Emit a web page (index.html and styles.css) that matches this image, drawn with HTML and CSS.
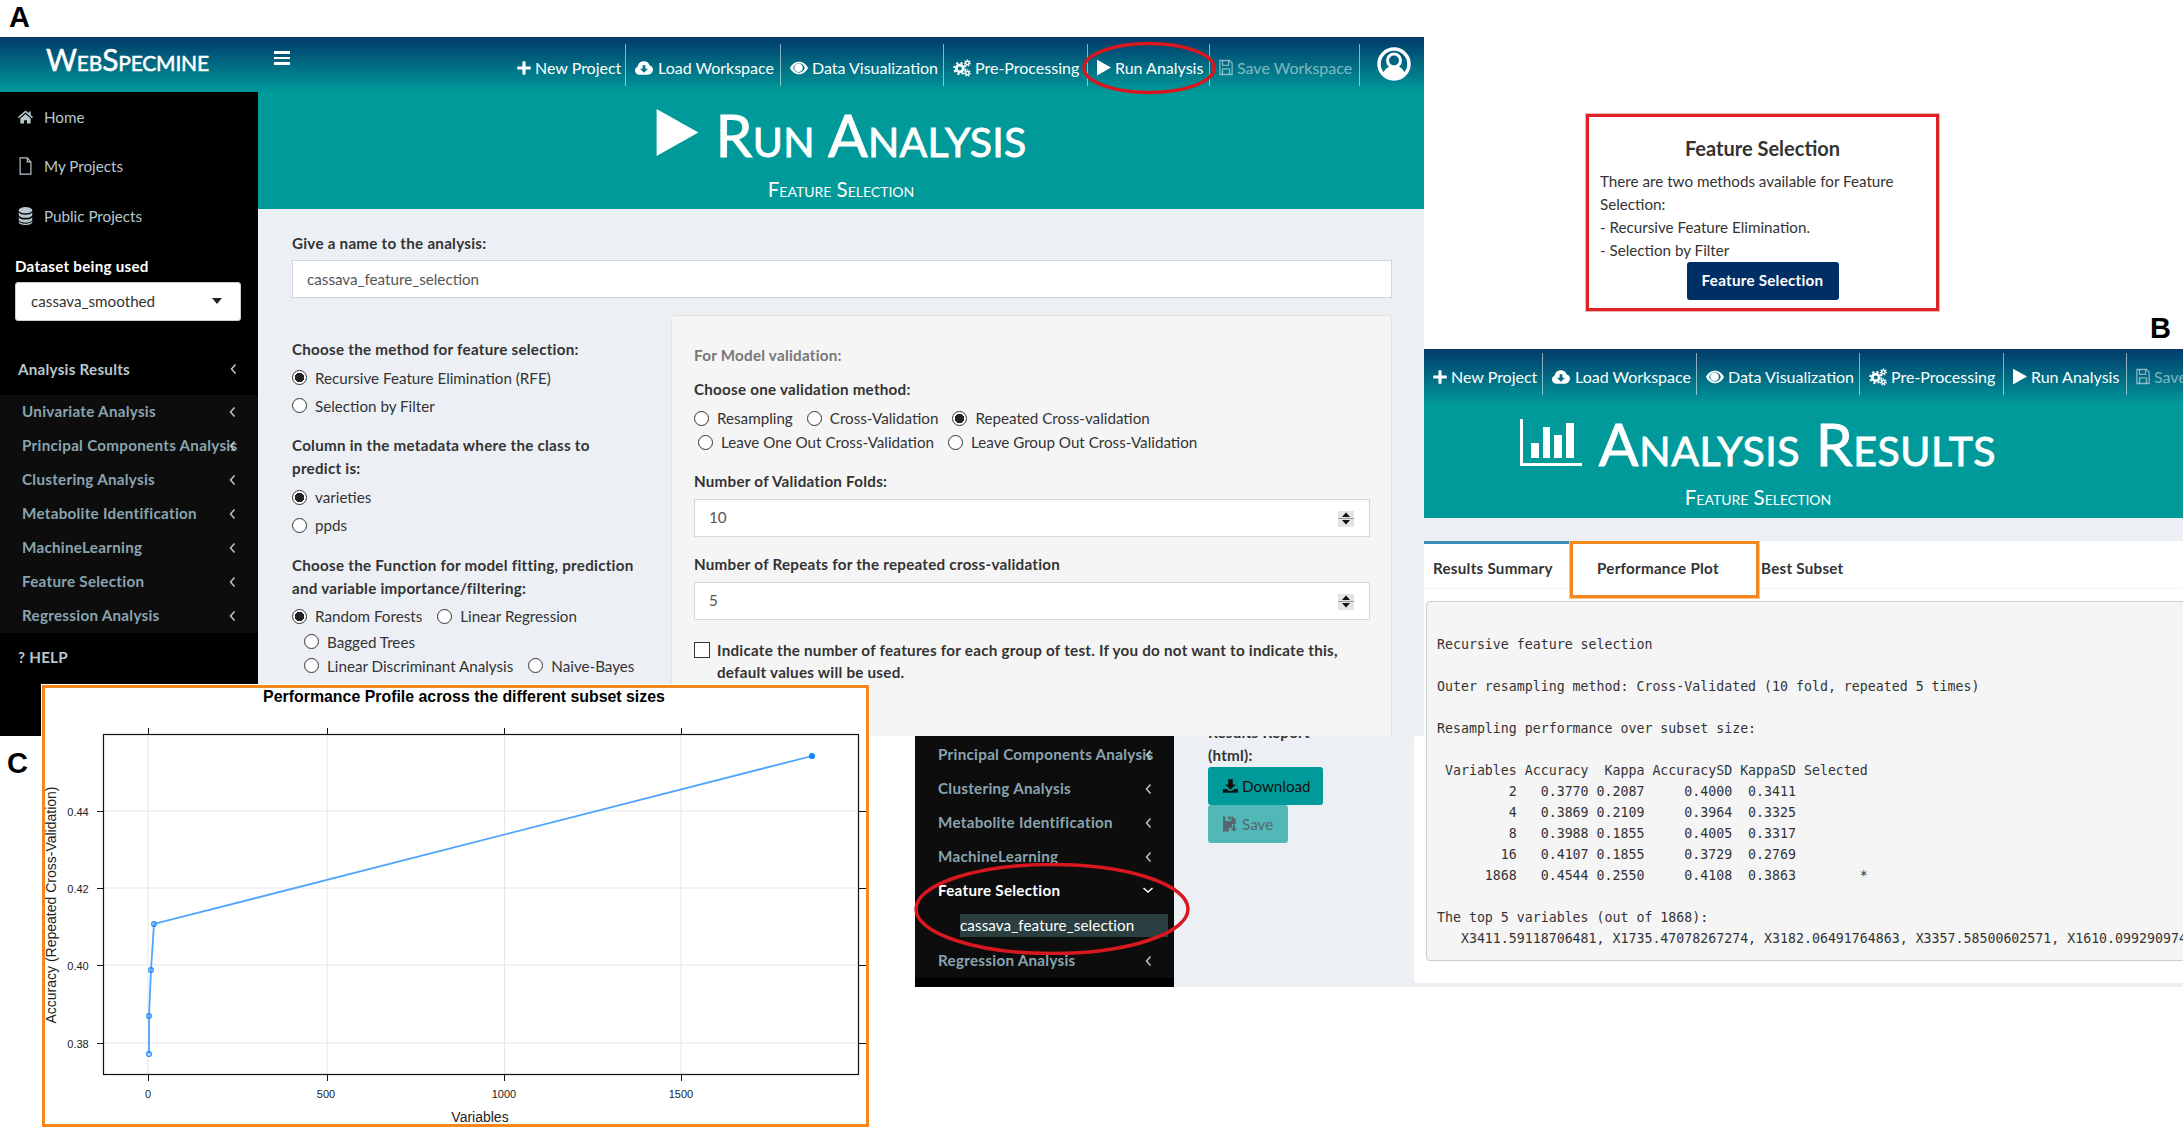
FILE: index.html
```html
<!DOCTYPE html>
<html lang="en">
<head>
<meta charset="utf-8">
<title>WebSpecmine feature selection</title>
<link rel="stylesheet" href="styles.css">
</head>
<body>
<svg class="sprite" aria-hidden="true">
  <symbol id="i-plus" viewBox="0 0 16 16"><path d="M6.2 1.2a1 1 0 0 1 1-1h1.6a1 1 0 0 1 1 1v5h5a1 1 0 0 1 1 1v1.6a1 1 0 0 1-1 1h-5v5a1 1 0 0 1-1 1H7.2a1 1 0 0 1-1-1v-5h-5a1 1 0 0 1-1-1V7.2a1 1 0 0 1 1-1h5z"/></symbol>
  <symbol id="i-cloud" viewBox="0 0 20 16"><path fill-rule="evenodd" d="M5 15.5C2.2 15.5 0 13.4 0 10.8c0-2 1.2-3.7 3-4.4C3.4 3 6.3.5 9.8.5c3 0 5.6 1.8 6.6 4.6 2.1.5 3.6 2.4 3.6 4.7 0 3.1-2.4 5.7-5.5 5.7zM10 13.2l4.4-4.4h-2.9V5h-3v3.8H5.6z"/></symbol>
  <symbol id="i-eye" viewBox="0 0 20 14"><path fill-rule="evenodd" d="M10 0C5.5 0 1.8 3 0 7c1.800 4 5.500 7 10 7s8.200-3 10-7C18.200 3 14.500 0 10 0zM10 1.800c-3 0-5.500 2.300-6.500 5.200 1 2.900 3.500 5.200 6.500 5.200s5.500-2.300 6.500-5.200c-1-2.900-3.500-5.200-6.500-5.200z"/><circle cx="9.500" cy="6.800" r="4.700"/></symbol>
  <symbol id="i-cogs" viewBox="0 0 20 20">
    <circle cx="7.500" cy="10.500" r="3.800" fill="none" stroke="currentColor" stroke-width="3"/>
    <circle cx="7.500" cy="10.500" r="6.300" fill="none" stroke="currentColor" stroke-width="2" stroke-dasharray="2.500 2.450"/>
    <circle cx="16" cy="4.500" r="1.900" fill="none" stroke="currentColor" stroke-width="1.700"/>
    <circle cx="16" cy="4.500" r="3.300" fill="none" stroke="currentColor" stroke-width="1.300" stroke-dasharray="1.500 1.400"/>
    <circle cx="16" cy="15.500" r="1.900" fill="none" stroke="currentColor" stroke-width="1.700"/>
    <circle cx="16" cy="15.500" r="3.300" fill="none" stroke="currentColor" stroke-width="1.300" stroke-dasharray="1.500 1.400"/>
  </symbol>
  <symbol id="i-play" viewBox="0 0 16 18"><path d="M0 0 16 9 0 18z"/></symbol>
  <symbol id="i-floppy" viewBox="0 0 16 18"><g fill="none" stroke="currentColor" stroke-width="1.500"><path d="M1 1h11l3 3v13H1z"/><path d="M4 1v5.500h7V1"/><path d="M4 17v-6.500h8V17"/></g></symbol>
  <symbol id="i-home" viewBox="0 0 16 14"><path d="M8 0 0 7l1 1.200 7-6 7 6 1-1.200-2.500-2.200V1h-2v2.100z"/><path d="M2.500 8.500V14h4v-3.500h3V14h4V8.500L8 3.800z"/></symbol>
  <symbol id="i-file" viewBox="0 0 14 20"><path fill="none" stroke="currentColor" stroke-width="1.300" d="M1 1h8l4 4.500V19H1zM9 1v4.500h4"/></symbol>
  <symbol id="i-db" viewBox="0 0 16 20"><ellipse cx="8" cy="3.500" rx="7.500" ry="3.500"/><path d="M.5 5.500v3c0 2 3.400 3.500 7.500 3.500s7.500-1.500 7.500-3.500v-3C14.500 7.800 11.500 8.500 8 8.500S1.500 7.800.5 5.500z"/><path d="M.5 11v3c0 2 3.400 3.500 7.500 3.500s7.500-1.500 7.500-3.500v-3c-1 2.300-4 3-7.500 3S1.500 13.300.5 11z"/><path d="M.5 15.500V17c0 1.800 3.400 3 7.500 3s7.500-1.200 7.500-3v-1.500c-1 2.200-4 3-7.500 3s-6.500-.8-7.500-3z"/></symbol>
  <symbol id="i-user" viewBox="0 0 34 34">
    <circle cx="17" cy="17" r="15" fill="none" stroke="currentColor" stroke-width="3.500"/>
    <circle cx="17" cy="13.500" r="6.500" fill="none" stroke="currentColor" stroke-width="3"/>
    <path d="M6 27c1.500-5 5-7 7-7.500 2.500 1.500 5.500 1.500 8 0 2 .5 5.500 2.500 7 7.500a15 15 0 0 1-22 0z"/>
  </symbol>
  <symbol id="i-left" viewBox="0 0 8 12"><path d="M6 1.500 2 6l4 4.500" fill="none" stroke="currentColor" stroke-width="1.500"/></symbol>
  <symbol id="i-down" viewBox="0 0 12 8"><path d="M1.500 2 6 6l4.500-4" fill="none" stroke="currentColor" stroke-width="1.500"/></symbol>
  <symbol id="i-dl" viewBox="0 0 20 18"><path d="M7 0h6v7h4l-7 7-7-7h4zM0 13h5l3 2.500h4l3-2.500h5v5H0z"/></symbol>
  <symbol id="i-savedn" viewBox="0 0 20 20"><path d="M0 0h3v6h8V0h2l4 4v6h-5v5H8v5H0z"/><path d="M7 0h3v4H7zM13 11h3v5h3l-4.500 4L10 16h3z"/></symbol>
  <symbol id="i-bars" viewBox="0 0 62 48"><path d="M0 0h3v44h59v3H0zM11 24h8v15h-8zM23 8h7v31h-7zM34 16h8v23h-8zM46 4h8v35h-8z"/></symbol>
  <symbol id="i-spin" viewBox="0 0 16 17"><rect width="16" height="17" fill="#e4e4e4"/><rect x="0" y="0" width="16" height="1" fill="#fff"/><rect x="0" y="8" width="16" height="1" fill="#9a9a9a"/><path d="M8 2.500 12 7H4zM8 14.500 4 10h8z" fill="#111"/></symbol>
</svg>

<!-- Panel letters -->
<div class="letter letter-a">A</div>
<div class="letter letter-b">B</div>
<div class="letter letter-c">C</div>

<!-- Panel D: sidebar fragment with Feature Selection open -->
<section class="shot shot-d">
  <aside class="side-d">
    <ul class="submenu submenu-d">
      <li>Principal Components Analysis<svg class="chev"><use href="#i-left"/></svg></li>
      <li>Clustering Analysis<svg class="chev"><use href="#i-left"/></svg></li>
      <li>Metabolite Identification<svg class="chev"><use href="#i-left"/></svg></li>
      <li>MachineLearning<svg class="chev"><use href="#i-left"/></svg></li>
      <li class="open">Feature Selection<svg class="chev-down"><use href="#i-down"/></svg></li>
      <li class="leaf"><span class="leaf-text">cassava_feature_selection</span></li>
      <li>Regression Analysis<svg class="chev"><use href="#i-left"/></svg></li>
    </ul>
  </aside>
  <div class="report">
    <div class="report-col">
      <div class="report-label">Results Report<br>(html):</div>
      <div class="btn-teal"><svg class="ic-dl"><use href="#i-dl"/></svg>Download</div>
      <div class="btn-teal-off"><svg class="ic-dl"><use href="#i-savedn"/></svg>Save</div>
    </div>
    <div class="box-edge"></div>
  </div>
</section>

<!-- Panel A: Run Analysis page -->
<section class="shot shot-a">
  <header class="navbar navbar-a">
    <div class="logo">WebSpecmine</div>
    <div class="burger"><i></i><i></i><i></i></div>
    <nav class="topnav">
      <div class="navitem"><svg class="ic ic-plus"><use href="#i-plus"/></svg>New Project</div>
      <div class="navitem"><svg class="ic ic-cloud"><use href="#i-cloud"/></svg>Load Workspace</div>
      <div class="navitem"><svg class="ic ic-eye"><use href="#i-eye"/></svg>Data Visualization</div>
      <div class="navitem"><svg class="ic ic-cog"><use href="#i-cogs"/></svg>Pre-Processing</div>
      <div class="navitem"><svg class="ic ic-play"><use href="#i-play"/></svg>Run Analysis</div>
      <div class="navitem muted"><svg class="ic ic-play"><use href="#i-floppy"/></svg>Save Workspace</div>
    </nav>
    <svg class="ic-user"><use href="#i-user"/></svg>
  </header>
  <div class="layout-a">
    <aside class="side-a">
      <ul class="mainmenu">
        <li><svg class="mi"><use href="#i-home"/></svg>Home</li>
        <li><svg class="mi"><use href="#i-file"/></svg>My Projects</li>
        <li><svg class="mi"><use href="#i-db"/></svg>Public Projects</li>
      </ul>
      <div class="ds-label">Dataset being used</div>
      <div class="ds-select">cassava_smoothed<span class="caret"></span></div>
      <div class="ar-title">Analysis Results<svg class="chev"><use href="#i-left"/></svg></div>
      <ul class="submenu">
        <li>Univariate Analysis<svg class="chev"><use href="#i-left"/></svg></li>
        <li>Principal Components Analysis<svg class="chev"><use href="#i-left"/></svg></li>
        <li>Clustering Analysis<svg class="chev"><use href="#i-left"/></svg></li>
        <li>Metabolite Identification<svg class="chev"><use href="#i-left"/></svg></li>
        <li>MachineLearning<svg class="chev"><use href="#i-left"/></svg></li>
        <li>Feature Selection<svg class="chev"><use href="#i-left"/></svg></li>
        <li>Regression Analysis<svg class="chev"><use href="#i-left"/></svg></li>
      </ul>
      <div class="help">? HELP</div>
    </aside>
    <main class="main-a">
      <div class="head head-a">
        <div class="head-row">
          <svg class="head-play"><use href="#i-play"/></svg>
          <h1 class="head-title">Run Analysis</h1>
        </div>
        <div class="head-sub">Feature Selection</div>
      </div>
      <div class="form">
        <div class="lbl">Give a name to the analysis:</div>
        <div class="field field-name">cassava_feature_selection</div>
        <div class="cols">
          <div class="col-left">
            <div class="lbl">Choose the method for feature selection:</div>
            <label class="opt first"><input type="radio" name="m" checked>Recursive Feature Elimination (RFE)</label>
            <label class="opt"><input type="radio" name="m">Selection by Filter</label>
            <div class="lbl gap">Column in the metadata where the class to<br>predict is:</div>
            <label class="opt first"><input type="radio" name="c" checked>varieties</label>
            <label class="opt"><input type="radio" name="c">ppds</label>
            <div class="lbl gap">Choose the Function for model fitting, prediction<br>and variable importance/filtering:</div>
            <div class="optrow first tall">
              <label><input type="radio" name="f" checked>Random Forests</label>
              <label class="w15"><input type="radio" name="f">Linear Regression</label>
            </div>
            <div class="optrow indent"><label><input type="radio" name="f">Bagged Trees</label></div>
            <div class="optrow indent">
              <label><input type="radio" name="f">Linear Discriminant Analysis</label>
              <label class="w15"><input type="radio" name="f">Naive-Bayes</label>
            </div>
          </div>
          <div class="well">
            <div class="lbl lbl-gray">For Model validation:</div>
            <div class="lbl lbl-choose">Choose one validation method:</div>
            <div class="optrow vfirst">
              <label><input type="radio" name="v">Resampling</label>
              <label class="w14"><input type="radio" name="v">Cross-Validation</label>
              <label class="w14"><input type="radio" name="v" checked>Repeated Cross-validation</label>
            </div>
            <div class="optrow indent">
              <label><input type="radio" name="v">Leave One Out Cross-Validation</label>
              <label class="w14"><input type="radio" name="v">Leave Group Out Cross-Validation</label>
            </div>
            <div class="lbl lbl-folds">Number of Validation Folds:</div>
            <div class="field field-num">10<svg class="spin"><use href="#i-spin"/></svg></div>
            <div class="lbl lbl-rep">Number of Repeats for the repeated cross-validation</div>
            <div class="field field-num">5<svg class="spin"><use href="#i-spin"/></svg></div>
            <label class="check"><input type="checkbox"><span>Indicate the number of features for each group of test. If you do not want to indicate this,<br>default values will be used.</span></label>
          </div>
        </div>
      </div>
    </main>
  </div>
</section>
<svg class="ring ring-a" viewBox="0 0 136 54"><ellipse cx="68" cy="27" rx="65" ry="24.500"/></svg>

<!-- Panel: Feature Selection card -->
<section class="card">
  <h3 class="card-title">Feature Selection</h3>
  <p class="card-text">There are two methods available for Feature<br>Selection:<br>- Recursive Feature Elimination.<br>- Selection by Filter</p>
  <div class="card-btn">Feature Selection</div>
</section>

<!-- Panel B: Analysis Results page -->
<section class="shot shot-b">
  <header class="navbar navbar-b">
    <nav class="topnav">
      <div class="navitem"><svg class="ic ic-plus"><use href="#i-plus"/></svg>New Project</div>
      <div class="navitem"><svg class="ic ic-cloud"><use href="#i-cloud"/></svg>Load Workspace</div>
      <div class="navitem"><svg class="ic ic-eye"><use href="#i-eye"/></svg>Data Visualization</div>
      <div class="navitem"><svg class="ic ic-cog"><use href="#i-cogs"/></svg>Pre-Processing</div>
      <div class="navitem"><svg class="ic ic-play"><use href="#i-play"/></svg>Run Analysis</div>
      <div class="navitem muted"><svg class="ic ic-play"><use href="#i-floppy"/></svg>Save Workspace</div>
    </nav>
  </header>
  <div class="head head-b">
    <div class="head-row">
      <svg class="head-bars"><use href="#i-bars"/></svg>
      <h1 class="head-title">Analysis Results</h1>
    </div>
    <div class="head-sub">Feature Selection</div>
  </div>
  <div class="results">
    <div class="tabs">
      <div class="tab tab-active">Results Summary</div>
      <div class="tab tab-hi">Performance Plot</div>
      <div class="tab tab-last">Best Subset</div>
    </div>
<pre class="output">

Recursive feature selection

Outer resampling method: Cross-Validated (10 fold, repeated 5 times)

Resampling performance over subset size:

 Variables Accuracy  Kappa AccuracySD KappaSD Selected
         2   0.3770 0.2087     0.4000  0.3411
         4   0.3869 0.2109     0.3964  0.3325
         8   0.3988 0.1855     0.4005  0.3317
        16   0.4107 0.1855     0.3729  0.2769
      1868   0.4544 0.2550     0.4108  0.3863        *

The top 5 variables (out of 1868):
   X3411.59118706481, X1735.47078267274, X3182.06491764863, X3357.58500602571, X1610.09929097412
</pre>
  </div>
</section>

<!-- Panel C: performance plot -->
<section class="plot">
  <svg class="plot-svg" viewBox="45 688 821 436">
    <text class="p-title" x="464" y="702" text-anchor="middle">Performance Profile across the different subset sizes</text>
    <g class="p-grid">
      <path d="M148 734V1075M327 734V1075M504.500 734V1075M681 734V1075"/>
      <path d="M103 811H859M103 888H859M103 965H859M103 1043H859"/>
    </g>
    <rect class="p-frame" x="103.500" y="734.500" width="755" height="340"/>
    <g class="p-tick">
      <path d="M148.500 728V734M327.500 728V734M504.500 728V734M681.500 728V734"/>
      <path d="M148.500 1075V1081M327.500 1075V1081M504.500 1075V1081M681.500 1075V1081"/>
      <path d="M859 811.500H866M859 888.500H866M859 965.500H866M859 1043.500H866"/>
      <path d="M97 811.500H103M97 888.500H103M97 965.500H103M97 1043.500H103"/>
    </g>
    <g class="p-num" text-anchor="middle">
      <text x="78" y="816">0.44</text><text x="78" y="893">0.42</text><text x="78" y="970">0.40</text><text x="78" y="1048">0.38</text>
      <text x="148" y="1098">0</text><text x="326" y="1098">500</text><text x="504" y="1098">1000</text><text x="681" y="1098">1500</text>
    </g>
    <text class="p-axis" x="480" y="1122" text-anchor="middle">Variables</text>
    <text class="p-axis" transform="translate(56 905) rotate(-90)" text-anchor="middle">Accuracy (Repeated Cross-Validation)</text>
    <polyline class="p-line" points="149,1054 149,1016 151,970 154,924 812,756"/>
    <g class="p-pt">
      <circle cx="149" cy="1054" r="2.300"/><circle cx="149" cy="1016" r="2.300"/><circle cx="151" cy="970" r="2.300"/><circle cx="154" cy="924" r="2.300"/>
      <circle class="p-best" cx="812" cy="756" r="2.500"/>
    </g>
  </svg>
</section>

<svg class="ring ring-d" viewBox="0 0 276 92"><ellipse cx="138" cy="46" rx="136" ry="44.500"/></svg>
</body>
</html>
```
FILE: styles.css
```css
* { box-sizing: border-box; }
html, body { margin: 0; padding: 0; height: 1128px; overflow: hidden; background: #fff; }
body { position: relative; width: 2183px; font-family: "Lato", "Noto Sans", sans-serif; font-size: 15.2px; color: #333; }
ul { list-style: none; margin: 0; padding: 0; }
h1, h3, p { margin: 0; }
.sprite { position: absolute; width: 0; height: 0; }

/* free-canvas panels of the composite figure */
.letter { position: absolute; font: bold 29px/1 "Liberation Sans", sans-serif; color: #000; }
.letter-a { left: 9px; top: 3px; }
.letter-b { left: 2150px; top: 314px; }
.letter-c { left: 7px; top: 749px; }
.shot { position: absolute; overflow: hidden; background: #ecf0f5; }
.shot-a { left: 0; top: 37px; width: 1424px; height: 699px; }
.shot-b { left: 1424px; top: 349px; width: 759px; height: 638px; }
.shot-d { left: 915px; top: 736px; width: 509px; height: 251px; display: flex; }
.ring { position: absolute; fill: none; stroke: #d8181f; stroke-width: 3.5; }
.ring-a { left: 1081px; top: 41px; width: 136px; height: 54px; }
.ring-d { left: 914px; top: 863px; width: 276px; height: 92px; }

/* navbar */
.navbar { display: flex; align-items: flex-start; height: 55px; background: linear-gradient(#023a6b 0%, #009a9a 100%); color: #fff; }
.navbar-a { padding-top: 7px; }
.navbar-b { height: 56px; padding-top: 4px; }
.logo { width: 228px; margin: 0 0 0 46px; flex: none; font-size: 30px; line-height: 30px; letter-spacing: -.2px; font-variant: small-caps; font-weight: 400; -webkit-text-stroke: .5px #fff; }
.burger { display: flex; flex-direction: column; gap: 3px; width: 16px; margin-top: 7px; flex: none; }
.burger i { display: block; height: 2.500px; background: #fff; }
.topnav { display: grid; grid-template-columns: 118px 155px 163px 144px 122px 150px; }
.navbar-a .topnav { margin-left: auto; }
.navbar-b .topnav { grid-template-columns: 119px 154px 163px 144px 123px 150px; }
.navitem { display: flex; align-items: center; gap: 4px; height: 42px; padding: 5px 0 0 9px; border-right: 1px solid rgba(255,255,255,.55); white-space: nowrap; font-size: 16px; }
.muted { color: rgba(255,255,255,.5); }
.ic { flex: none; height: 16px; fill: currentColor; }
.ic-plus { width: 14px; height: 14px; }
.ic-cloud { width: 18px; margin-right: 1px; }
.ic-eye { width: 18px; height: 14px; }
.ic-cog { width: 18px; height: 18px; }
.ic-play { width: 14px; height: 17px; }
.ic-user { flex: none; width: 34px; height: 34px; margin: 3px 13px 0 17px; fill: #fff; color: #fff; }

/* sidebars */
.layout-a { display: flex; height: 644px; }
.side-a { flex: none; width: 258px; background: #000; color: #b8c7ce; }
.mainmenu li { display: flex; align-items: center; height: 49.500px; padding-left: 18px; }
.mi { width: 15px; height: 18px; margin-right: 11px; fill: currentColor; }
.ds-label { margin: 14px 0 4.500px 15px; font-weight: 700; line-height: 23px; letter-spacing: .25px; color: #fff; }
.ds-select { position: relative; width: 226px; height: 39px; margin-left: 15px; padding-left: 15px; line-height: 36px; color: #333; background: #fff; border: 1px solid #ccc; border-radius: 3px; }
.caret { position: absolute; right: 18px; top: 15px; border: 5px solid transparent; border-top: 6px solid #222; border-bottom: 0; }
.ar-title { position: relative; height: 34px; margin-top: 31px; padding-left: 18px; line-height: 34px; font-weight: 700; letter-spacing: .25px; }
.submenu { margin-top: 9px; padding: 0; background: #0d0d0d; color: #8aa4af; font-weight: 700; letter-spacing: .28px; }
.submenu li { position: relative; height: 34px; padding-left: 22px; line-height: 33px; white-space: nowrap; }
.chev { position: absolute; left: 228px; top: 11px; width: 9px; height: 12px; color: #b8c7ce; }
.ar-title .chev { left: 229px; }
.help { margin: 12.500px 0 0 18px; font-weight: 700; line-height: 23px; letter-spacing: .25px; }

.side-d { flex: none; width: 259px; height: 251px; background: #000; }
.submenu-d { margin: 0; padding-top: 2px; height: 242px; }
.submenu-d li { padding-left: 23px; }
.submenu-d .chev { left: 229px; }
.submenu-d .open { color: #fff; }
.chev-down { position: absolute; left: 227px; top: 12px; width: 12px; height: 8px; color: #fff; }
.submenu-d .leaf { height: 36px; padding: 6px 0 0 45px; font-weight: 400; letter-spacing: .1px; color: #fff; line-height: 23px; }
.leaf-text { display: block; width: 208px; height: 23px; background: #2b3f40; }

/* report part of panel D */
.report { flex: 1; display: flex; justify-content: space-between; }
.report-col { padding: 0 0 0 34px; margin-top: -15px; }
.report-label { font-weight: 700; line-height: 23px; color: #333; letter-spacing: .25px; }
.btn-teal, .btn-teal-off { display: flex; align-items: center; gap: 4px; height: 38px; padding-left: 15px; border-radius: 3px; }
.btn-teal { width: 115px; background: #009a9a; color: #111; }
.btn-teal-off { width: 80px; background: #52b7b7; color: #56686e; }
.ic-dl { width: 15px; height: 16px; fill: currentColor; }
.box-edge { width: 10px; height: 247px; background: #fff; border-radius: 3px 0 0 3px; }

/* page heads */
.main-a { flex: 1; min-width: 0; }
.head { background: #009a9a; color: #fff; text-align: center; }
.head-a { height: 117px; padding-top: 13px; }
.head-b { height: 113px; padding: 9px 91px 0 0; }
.head-row { display: flex; align-items: center; justify-content: center; gap: 17px; height: 60px; }
.head-play { width: 43px; height: 47px; margin-top: -6px; fill: #fff; }
.head-bars { width: 62px; height: 48px; margin-top: -2px; fill: #fff; }
.head-title { font-size: 59px; line-height: 60px; font-weight: 400; font-variant: small-caps; letter-spacing: .2px; white-space: nowrap; -webkit-text-stroke: .9px #fff; }
.head-b .head-title { letter-spacing: .55px; }
.head-sub { margin-top: 12px; font-size: 20.500px; line-height: 24px; font-variant: small-caps; }
.head-b .head-sub { margin-top: 11px; }

/* run analysis form */
.form { padding: 22.500px 32px 0 34px; }
.lbl { font-weight: 700; line-height: 23px; letter-spacing: .25px; }
.field { position: relative; height: 38px; margin-top: 5.500px; padding-left: 14px; line-height: 37px; background: #fff; border: 1px solid #d2d6de; color: #555; }
.cols { display: flex; margin-top: 17px; }
.col-left { flex: none; width: 379px; padding-top: 22.500px; }
.opt { display: flex; align-items: center; height: 28px; }
.opt.first { margin-top: 3px; }
.gap { margin-top: 14.500px; }
input[type="radio"] { appearance: none; flex: none; width: 15px; height: 15px; margin: 0 8px 0 0; border: 1px solid #333; border-radius: 50%; background: #fff; }
input[type="radio"]:checked { background: radial-gradient(circle, #222 0 4.500px, #fff 5px); }
.optrow { display: flex; align-items: center; height: 24px; }
.optrow label { display: flex; align-items: center; white-space: nowrap; }
.optrow.first { margin-top: 3px; }
.optrow.tall { height: 27px; }
.indent { padding-left: 4px; }
.col-left .indent { padding-left: 12px; }
.w15 { margin-left: 15px; }
.w14 { margin-left: 14px; }
.well { flex: 1; height: 500px; padding: 27.500px 21px 0 22px; background: #f5f5f5; border: 1px solid #e3e3e3; border-radius: 4px; }
.lbl-gray { color: #777; }
.lbl-choose { margin-top: 11px; }
.vfirst { margin-top: 5.500px; }
.lbl-folds { margin-top: 15.500px; }
.lbl-rep { margin-top: 16.500px; }
.field-num { margin-top: 6px; line-height: 35px; }
.spin { position: absolute; right: 15px; top: 10px; width: 16px; height: 17px; }
.check { display: flex; margin-top: 18.500px; font-weight: 700; line-height: 22.500px; letter-spacing: .25px; white-space: nowrap; }
.check input { flex: none; width: 16px; height: 16px; margin: 3px 7px 0 0; appearance: none; background: #fff; border: 1px solid #333; }

/* feature selection card */
.card { position: absolute; left: 1586px; top: 114px; width: 353px; height: 197px; padding: 17.500px 11px 0; background: #fff; border: 3px solid #de2027; outline: 1px solid #f0b6b8; }
.card-title { font-size: 20px; line-height: 26px; text-align: center; font-weight: 700; }
.card-text { margin-top: 9px; line-height: 23px; }
.card-btn { width: 152px; height: 38px; margin: 0 auto; line-height: 37px; text-align: center; font-weight: 700; letter-spacing: .25px; color: #fff; background: #002f65; border-radius: 3px; }

/* results panel */
.results { height: 442px; background: #fff; margin-top: 23px; padding: 0 0 0 2px; overflow: hidden; border-radius: 0 0 3px 3px; }
.tabs { position: relative; display: flex; height: 48px; margin-left: -2px; border-bottom: 1px solid #f4f4f4; font-weight: 700; letter-spacing: .25px; }
.tab { line-height: 22px; padding-top: 15.500px; white-space: nowrap; }
.tab-active { width: 146px; padding-left: 9px; border-top: 3px solid #3c8dbc; padding-top: 12.500px; }
.tab-hi { width: 189px; height: 57px; padding-left: 24px; padding-top: 12.500px; border: 3px solid #f5871f; background: #fff; outline: 1px solid #f9c48f; }
.tab-last { padding-left: 2px; }
.output { width: 1200px; height: 360px; margin: 12px 0 0; padding: 10.500px 0 0 10px; font: 13.250px/21px "DejaVu Sans Mono", monospace; color: #333; background: #f5f5f5; border: 1px solid #ccc; border-radius: 4px; overflow: hidden; }

/* plot */
.plot { position: absolute; left: 42px; top: 685px; width: 827px; height: 442px; background: #fff; border: 3px solid #f5871f; outline: 1px solid #fff; }
.plot-svg { display: block; width: 821px; height: 436px; }
.p-title { font: bold 15.900px "Liberation Sans", sans-serif; fill: #000; }
.p-grid path { stroke: #e6e6e6; fill: none; }
.p-frame { fill: none; stroke: #111; stroke-width: 1.200; }
.p-tick path { stroke: #111; fill: none; }
.p-num text { font: 11px "Liberation Sans", sans-serif; fill: #222; }
.p-axis { font: 14px "Liberation Sans", sans-serif; fill: #222; }
.p-line { fill: none; stroke: #4ea5fb; stroke-width: 1.800; }
.p-pt circle { fill: none; stroke: #1b86f5; stroke-width: 1.200; }
.p-pt .p-best { fill: #1b86f5; }
```
